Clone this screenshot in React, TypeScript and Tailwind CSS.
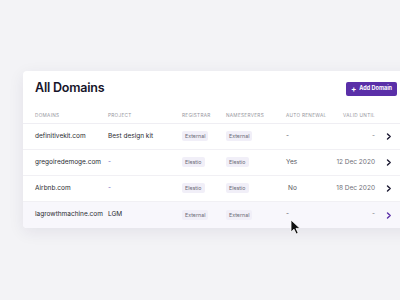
import React from "react";

const rows = [
  { d: "definitivekit.com", p: "Best design kit", r: "External", n: "External", a: "-", v: "-" },
  { d: "gregoiredemoge.com", p: "-", r: "Elestio", n: "Elestio", a: "Yes", v: "12 Dec 2020" },
  { d: "Airbnb.com", p: "-", r: "Elestio", n: "Elestio", a: "No", v: "18 Dec 2020" },
  { d: "lagrowthmachine.com", p: "LGM", r: "External", n: "External", a: "-", v: "-" },
];

const cols = "grid grid-cols-[73px_74px_44px_60px_50px_39px_24px] items-center pl-[12px]";

function Badge({ t }: { t: string }) {
  return (
    <span className="inline-block rounded-[2px] bg-[#f1eff8] px-[3px] py-[1px] text-[5.3px] leading-[8px] text-[#6b6a75]">
      {t}
    </span>
  );
}

function Chevron({ c }: { c: string }) {
  return (
    <svg width="6" height="7" viewBox="0 0 6 7" className="ml-[11px]">
      <path d="M1.5 1 L4.2 3.5 L1.5 6" stroke={c} strokeWidth="1.4" fill="none" strokeLinecap="round" strokeLinejoin="round" />
    </svg>
  );
}

export default function App() {
  return (
    <div
      className="relative h-[300px] w-[400px] overflow-hidden bg-[#f3f3f6] pl-[23px] pt-[71px]"
      style={{ fontFamily: "Inter, 'Noto Sans', sans-serif" }}
    >
      <div className="w-[400px] overflow-hidden rounded-[4px] bg-white shadow-[0_4px_16px_rgba(40,30,80,0.08)]">
        <div className="flex h-[34px] items-center justify-between pl-[12px] pr-[26px] pt-[1px]">
          <div className="text-[12.5px] font-semibold tracking-[-0.2px] text-[#16142a]">All Domains</div>
          <div className="flex h-[14px] w-[51px] items-center justify-center gap-[3px] rounded-[2px] bg-[#5a2fa8] text-[5.5px] font-bold text-white">
            <span className="text-[8px] font-bold leading-none">+</span>
            <span>Add Domain</span>
          </div>
        </div>
        <div className={cols + " h-[19px] pt-[3px] border-b border-[#efeef3] text-[4.7px] tracking-[0.3px] text-[#96959e]"}>
          <div>DOMAINS</div>
          <div>PROJECT</div>
          <div>REGISTRAR</div>
          <div>NAMESERVERS</div>
          <div>AUTO RENEWAL</div>
          <div className="text-right whitespace-nowrap">VALID UNTIL</div>
          <div></div>
        </div>
        {rows.map((r, i) => {
          const last = i === rows.length - 1;
          return (
            <div
              key={r.d}
              className={
                cols +
                " h-[26px] text-[6.5px] " +
                (last ? "bg-[#f8f7fc]" : "border-b border-[#f1f0f4]")
              }
            >
              <div className="whitespace-nowrap text-[#2a2a30]">{r.d}</div>
              <div className={r.p === "-" ? "text-[#6a5fc0]" : "text-[#2a2a30]"}>{r.p}</div>
              <div>
                <Badge t={r.r} />
              </div>
              <div>
                <Badge t={r.n} />
              </div>
              <div className={"text-[#55555c] " + (r.a === "No" ? "pl-[2px]" : "")}>{r.a}</div>
              <div className="whitespace-nowrap text-right text-[#707078]">{r.v}</div>
              <div className="flex items-center">
                <Chevron c={last ? "#5a2fa8" : "#1a1830"} />
              </div>
            </div>
          );
        })}
      </div>
      <svg className="absolute left-[290px] top-[219px]" width="12" height="16" viewBox="0 0 12 16">
        <path d="M1 1 L1 13 L4 10.2 L6.2 15 L8.2 14.1 L6 9.4 L10 9.4 Z" fill="#111" stroke="#fff" strokeWidth="0.8" />
      </svg>
    </div>
  );
}
